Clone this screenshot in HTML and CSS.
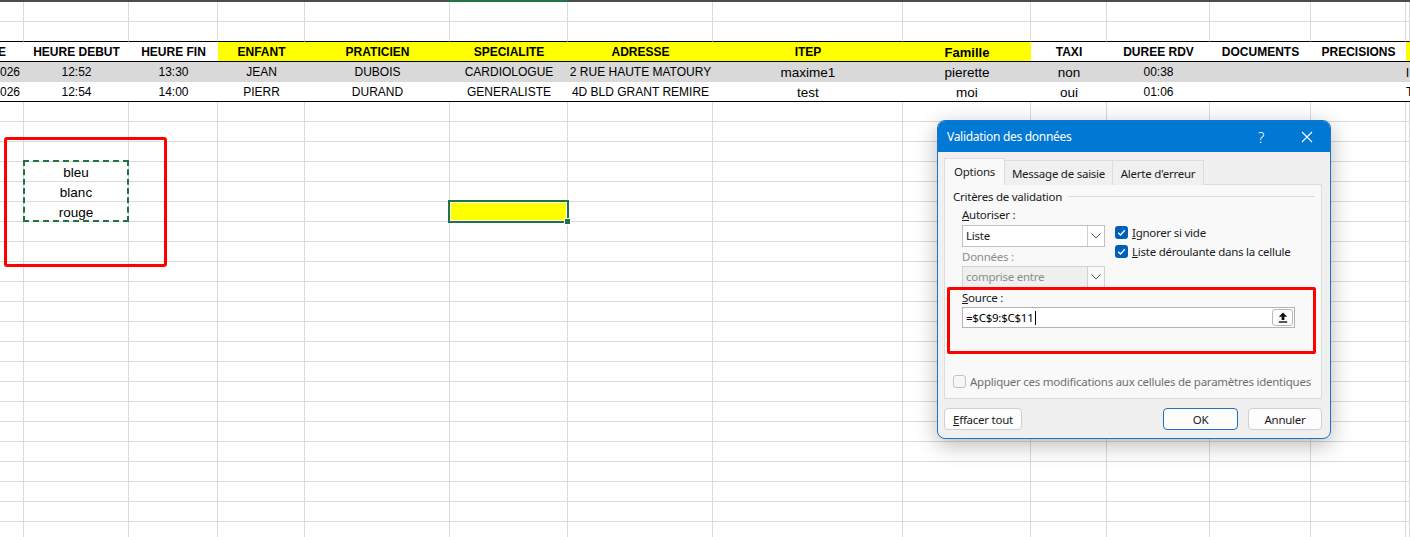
FILE: index.html
```html
<!DOCTYPE html>
<html lang="fr">
<head>
    <meta charset="UTF-8">
    <meta name="viewport" content="width=device-width, initial-scale=1.0">
    <title>Validation des données</title>
    <link rel="stylesheet" href="styles.css">
</head>
<body>
    <div class="feuille">
        <div class="haut"><span class="haut-sel"></span></div>
        <div id="lignes"></div>

        <!-- zone copiée et cellule active -->
        <div class="copie"></div>
        <div class="selection"><span class="poignee"></span></div>
        <div class="cadre-rouge"></div>

        <div class="dialogue">
            <div class="titre">
                <span class="titre-texte">Validation des données</span>
                <span class="titre-btn aide">?</span>
                <span class="titre-btn">
                    <svg width="12" height="12" viewBox="0 0 12 12"><path d="M1 1L11 11M11 1L1 11" stroke="#fff" stroke-width="1.1" fill="none"/></svg>
                </span>
            </div>
            <div class="corps">
                <div class="onglets">
                    <div class="onglet actif">Options</div>
                    <div class="onglet">Message de saisie</div>
                    <div class="onglet">Alerte d'erreur</div>
                </div>
                <div class="panneau">
                    <div class="groupe"><span>Critères de validation</span><span class="trait"></span></div>
                    <div class="criteres">
                        <div class="gauche">
                            <div class="lbl"><u>A</u>utoriser :</div>
                            <div class="liste">
                                <span class="liste-val">Liste</span>
                                <span class="fleche"><svg width="10" height="6" viewBox="0 0 10 6"><path d="M0.5 0.5L5 5L9.5 0.5" stroke="#555" fill="none"/></svg></span>
                            </div>
                            <div class="lbl grise">Données :</div>
                            <div class="liste inactive">
                                <span class="liste-val">comprise entre</span>
                                <span class="fleche"><svg width="10" height="6" viewBox="0 0 10 6"><path d="M0.5 0.5L5 5L9.5 0.5" stroke="#555" fill="none"/></svg></span>
                            </div>
                        </div>
                        <div class="droite">
                            <div class="case">
                                <span class="coche"><svg width="13" height="13" viewBox="0 0 13 13"><path d="M3.2 6.7L5.5 9L9.8 4.3" stroke="#fff" stroke-width="1.3" fill="none"/></svg></span>
                                <span><u>I</u>gnorer si vide</span>
                            </div>
                            <div class="case">
                                <span class="coche"><svg width="13" height="13" viewBox="0 0 13 13"><path d="M3.2 6.7L5.5 9L9.8 4.3" stroke="#fff" stroke-width="1.3" fill="none"/></svg></span>
                                <span><u>L</u>iste déroulante dans la cellule</span>
                            </div>
                        </div>
                    </div>
                    <div class="lbl source"><u>S</u>ource :</div>
                    <div class="saisie">
                        <span class="valeur">=$C$9:$C$11</span><span class="curseur"></span>
                        <span class="reduire"><svg width="10" height="11" viewBox="0 0 10 11"><path d="M5 0.5L9.2 4.8H6.4V8H3.6V4.8H0.8Z" fill="#111"/><rect x="0.8" y="9.3" width="8.4" height="1.4" fill="#111"/></svg></span>
                    </div>
                    <div class="case appliquer">
                        <span class="coche vide"></span>
                        <span>Appliquer ces modifications aux cellules de paramètres identiques</span>
                    </div>
                </div>
                <div class="boutons">
                    <button class="btn effacer"><u>E</u>ffacer tout</button>
                    <button class="btn ok">OK</button>
                    <button class="btn annuler">Annuler</button>
                </div>
            </div>
            <div class="cadre-source"></div>
        </div>
    </div>

    <script src="script.js"></script>
</body>
</html>
```

FILE: styles.css
```css
body {
    margin: 0;
    background: #fff;
    font-family: 'Liberation Sans', Arial, sans-serif;
    color: #000;
}
.feuille {
    position: relative;
    width: 1410px;
    height: 537px;
    overflow: hidden;
}
.haut {
    display: flex;
    height: 2px;
    background: #4d4d4d;
}
.haut-sel {
    margin-left: 449px;
    width: 119px;
    background: #217346;
}

/* lignes de la feuille */
.ligne {
    display: grid;
    grid-template-columns: 24px 105px 89px 87px 145px 118px 145px 190px 128px 76px 103px 101px 95px 1fr;
    height: 20px;
}
.c {
    box-sizing: border-box;
    height: 20px;
    border-right: 1px solid #dadada;
    border-bottom: 1px solid #dadada;
    font-size: 12px;
    line-height: 21px;
    text-align: center;
    white-space: nowrap;
    overflow: hidden;
}
.c.min {
    font-size: 13.5px;
}
.c.coupe span {
    display: block;
    width: 68px;
    margin-left: -44px;
}
.c.fin-col {
    text-align: left;
}
.bord .c {
    border-bottom-color: #000;
}
.entete .c {
    border-right: none;
    border-bottom-color: #000;
    font-weight: bold;
}
.entete .c.min {
    font-size: 13px;
}
.gris .c {
    border-right: none;
    background: #d9d9d9;
    border-bottom-color: #d9d9d9;
}
.fin .c {
    border-right: none;
    border-bottom-color: #000;
}
.c.jaune {
    background: #ffff00;
}

.copie {
    position: absolute;
    left: 23px;
    top: 160px;
    width: 106px;
    height: 62px;
    box-sizing: border-box;
    border: 2px dashed #217346;
}
.selection {
    position: absolute;
    left: 448px;
    top: 200px;
    width: 121px;
    height: 23px;
    box-sizing: border-box;
    border: 2px solid #217346;
    box-shadow: inset 0 0 0 1px #fff;
}
.poignee {
    position: absolute;
    right: -4px;
    bottom: -4px;
    width: 5px;
    height: 5px;
    background: #217346;
    border: 1px solid #fff;
}
.cadre-rouge {
    position: absolute;
    left: 4px;
    top: 137px;
    width: 163px;
    height: 130px;
    box-sizing: border-box;
    border: 3px solid #ff0000;
    border-radius: 3px;
}

/* boite de dialogue */
.dialogue {
    position: absolute;
    left: 937px;
    top: 120px;
    width: 394px;
    height: 319px;
    box-sizing: border-box;
    border: 1px solid #1b74c9;
    border-radius: 8px;
    background: #f0f0f0;
    box-shadow: 0 6px 22px rgba(0,0,0,0.28);
    overflow: hidden;
    font-family: 'Noto Sans', 'Open Sans', sans-serif;
    font-size: 11.5px;
    letter-spacing: -0.25px;
    color: #1a1a1a;
}
.titre {
    display: flex;
    align-items: center;
    height: 31px;
    background: #0078d4;
    color: #fff;
}
.titre-texte {
    flex: 1;
    padding-left: 9px;
    font-size: 12px;
    letter-spacing: -0.3px;
}
.titre-btn {
    display: flex;
    align-items: center;
    justify-content: center;
    width: 46px;
    height: 31px;
}
.aide {
    font-size: 15px;
    font-weight: 300;
}
.corps {
    padding: 6px 0 0 6px;
}
.onglets {
    display: flex;
    align-items: flex-end;
    height: 27px;
    margin-bottom: -1px;
}
.onglet {
    box-sizing: border-box;
    height: 25px;
    border: 1px solid #dcdcdc;
    border-left: none;
    border-bottom: none;
    background: #f0f0f0;
    display: flex;
    align-items: center;
    justify-content: center;
}
.onglet:nth-child(2) { width: 108px; }
.onglet:nth-child(3) { width: 91px; }
.onglet.actif {
    position: relative;
    width: 61px;
    height: 27px;
    border-left: 1px solid #dcdcdc;
    background: #f9f9f9;
    padding-bottom: 2px;
}
.panneau {
    box-sizing: border-box;
    width: 378px;
    height: 215px;
    border: 1px solid #dcdcdc;
    background: #f9f9f9;
    padding: 3px 6px 0 8px;
}
.groupe {
    display: flex;
    align-items: center;
    height: 16px;
}
.trait {
    flex: 1;
    margin: 1px 0 0 6px;
    border-top: 1px solid #dcdcdc;
}
.lbl {
    height: 16px;
    line-height: 16px;
    margin: 3px 0 0 9px;
}
.gauche .lbl {
    margin-left: 0;
}
.gauche .grise {
    margin-top: 2px;
    color: #8c8c8c;
}
.criteres {
    display: flex;
    margin-left: 9px;
}
.gauche {
    width: 143px;
}
.liste {
    box-sizing: border-box;
    display: flex;
    height: 22px;
    margin-top: 2px;
    border: 1px solid #bfbfbf;
    background: #fff;
}
.liste.inactive {
    margin-top: 1px;
    background: #efefef;
    border-color: #d2d2d2;
    color: #8c8c8c;
}
.liste-val {
    flex: 1;
    padding-left: 3px;
    line-height: 20px;
}
.fleche {
    display: flex;
    align-items: center;
    justify-content: center;
    width: 16px;
    border-left: 1px solid #d0d0d0;
    background: #fff;
}
.liste.inactive .fleche {
    background: #f9f9f9;
}
.droite {
    display: flex;
    flex-direction: column;
    gap: 3px;
    margin-left: 10px;
    padding-top: 20px;
}
.case {
    display: flex;
    align-items: center;
    height: 16px;
    white-space: nowrap;
}
.coche {
    flex-shrink: 0;
    display: flex;
    width: 13px;
    height: 13px;
    margin-right: 4px;
    border-radius: 3px;
    background: #005fb8;
}
.coche.vide {
    box-sizing: border-box;
    background: #f7f7f7;
    border: 1px solid #c2c2c2;
}
.source {
    margin-top: 2px;
}
.saisie {
    position: relative;
    box-sizing: border-box;
    display: flex;
    align-items: center;
    width: 333px;
    height: 21px;
    margin: 1px 0 0 9px;
    padding-left: 3px;
    border: 1px solid #b4b4b4;
    background: #fff;
    color: #000;
}
.curseur {
    width: 1px;
    height: 14px;
    margin-left: 1px;
    background: #000;
}
.reduire {
    position: absolute;
    right: 1px;
    top: 1px;
    box-sizing: border-box;
    display: flex;
    align-items: center;
    justify-content: center;
    width: 21px;
    height: 17px;
    border: 1px solid #b8b8b8;
    border-radius: 3px;
    background: #fdfdfd;
}
.appliquer {
    margin-top: 45px;
    color: #6f6f6f;
}
.boutons {
    display: flex;
    width: 378px;
    margin-top: 9px;
    gap: 10px;
}
.btn {
    box-sizing: border-box;
    height: 22px;
    padding: 0;
    border: 1px solid #d0d0d0;
    border-radius: 4px;
    background: #fdfdfd;
    font-family: inherit;
    font-size: 11.5px;
    letter-spacing: -0.25px;
    color: #1a1a1a;
}
.effacer {
    width: 78px;
    margin-right: auto;
}
.ok {
    width: 75px;
    border-color: #1f6fc4;
}
.annuler {
    width: 74px;
}
.cadre-source {
    position: absolute;
    left: 9px;
    top: 166px;
    width: 369px;
    height: 67px;
    box-sizing: border-box;
    border: 3px solid #ff0000;
    border-radius: 2px;
}
```

FILE: script.js
```js
// Construction de la grille Excel
var nbLignes = 27;
var nbCols = 14;

var contenu = {
    2: ['DATE', 'HEURE DEBUT', 'HEURE FIN', 'ENFANT', 'PRATICIEN', 'SPECIALITE', 'ADRESSE', 'ITEP', 'Famille', 'TAXI', 'DUREE RDV', 'DOCUMENTS', 'PRECISIONS', ''],
    3: ['01/01/2026', '12:52', '13:30', 'JEAN', 'DUBOIS', 'CARDIOLOGUE', '2 RUE HAUTE MATOURY', 'maxime1', 'pierette', 'non', '00:38', '', '', 'l'],
    4: ['01/01/2026', '12:54', '14:00', 'PIERR', 'DURAND', 'GENERALISTE', '4D BLD GRANT REMIRE', 'test', 'moi', 'oui', '01:06', '', '', 'T'],
    8: ['', 'bleu'],
    9: ['', 'blanc'],
    10: ['', 'rouge']
};

var typeLigne = { 1: 'bord', 2: 'entete', 3: 'gris', 4: 'fin' };

// cellules remplies en jaune
var jaunes = { 2: [3, 4, 5, 6, 7, 8, 13], 10: [5] };

var zone = document.getElementById('lignes');

for (var r = 0; r < nbLignes; r++) {
    var ligne = document.createElement('div');
    ligne.className = 'ligne' + (typeLigne[r] ? ' ' + typeLigne[r] : '');
    var valeurs = contenu[r] || [];

    for (var c = 0; c < nbCols; c++) {
        var texte = valeurs[c] || '';
        var cell = document.createElement('div');
        cell.className = 'c';
        if (c === 0) cell.className += ' coupe';
        if (c === nbCols - 1) cell.className += ' fin-col';
        // Calibri : les minuscules sont plus larges qu'en Arial
        if (/[a-z]/.test(texte)) cell.className += ' min';
        if (jaunes[r] && jaunes[r].indexOf(c) !== -1) cell.className += ' jaune';

        var span = document.createElement('span');
        span.textContent = texte;
        cell.appendChild(span);
        ligne.appendChild(cell);
    }
    zone.appendChild(ligne);
}
```
